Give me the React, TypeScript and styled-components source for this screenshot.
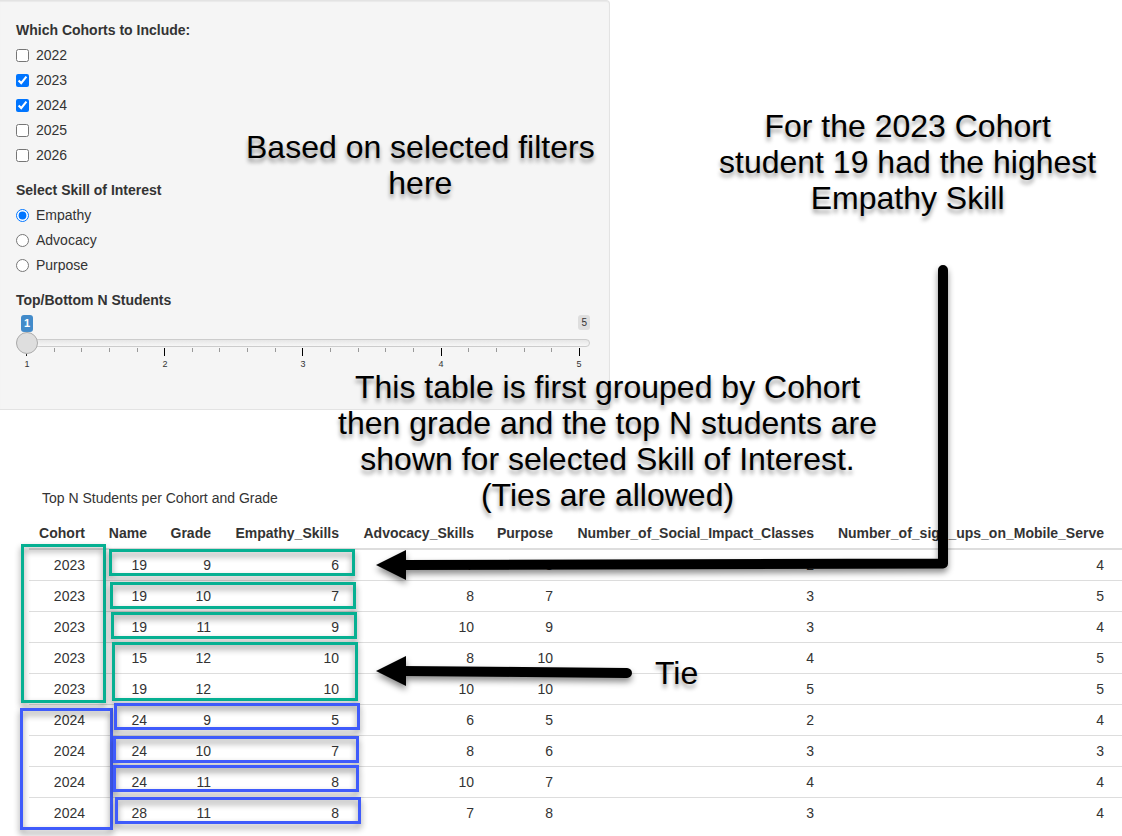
import React, { useState } from "react";
import styled, { createGlobalStyle } from "styled-components";

const GlobalStyle = createGlobalStyle`
  * { box-sizing: border-box; }
  body {
    margin: 0;
    background: #fff;
    color: #333;
    font: 14px/20px "Liberation Sans", Arial, sans-serif;
  }
`;

const Page = styled.div`
  position: relative;
  overflow: hidden;
  padding-bottom: 8px;
`;

const FilterPanel = styled.form`
  display: flex;
  flex-direction: column;
  gap: 10px;
  width: 100%;
  max-width: 610px;
  padding: 19px 19px 37px 16px;
  background: #f5f5f5;
  border: 1px solid #e3e3e3;
  border-left: 0;
  border-radius: 0 4px 4px 0;
  box-shadow: inset 0 1px 1px rgba(0, 0, 0, 0.05);
`;

const Group = styled.fieldset`
  display: flex;
  flex-direction: column;
  gap: 5px;
  margin: 0;
  padding: 0 0 5px;
  border: 0;
`;

const Legend = styled.legend`
  padding: 0;
  margin-bottom: 5px;
  font-weight: bold;
`;

const Option = styled.label`
  display: flex;
  align-items: center;
  gap: 7px;
`;

const Choice = styled.input`
  width: 13px;
  height: 13px;
  margin: 0;
  accent-color: #0075ff;
`;

const SliderField = styled.div`
  display: flex;
  flex-direction: column;
`;

const SliderLabel = styled.label`
  font-weight: bold;
`;

const Bubbles = styled.div`
  display: flex;
  justify-content: space-between;
  align-items: flex-start;
  height: 17px;
  margin-top: 5px;
  padding-left: 5px;
`;

const Bubble = styled.output<{ $active?: boolean }>`
  padding: ${(p) => (p.$active ? "1px 3px" : "0 3px")};
  border-radius: 3px;
  background: ${(p) => (p.$active ? "#428bca" : "#dedede")};
  color: ${(p) => (p.$active ? "#fff" : "#333")};
  font-size: ${(p) => (p.$active ? "11px" : "10px")};
  font-weight: ${(p) => (p.$active ? "bold" : "normal")};
  line-height: 15px;
`;

const Range = styled.input`
  appearance: none;
  position: relative;
  z-index: 1;
  width: 100%;
  height: 22px;
  margin: 0;
  background: transparent;

  &::-webkit-slider-runnable-track {
    height: 8px;
    border: 1px solid #ccc;
    border-radius: 8px;
    background: linear-gradient(to bottom, #dedede -50%, #fff 150%);
  }
  &::-webkit-slider-thumb {
    appearance: none;
    width: 22px;
    height: 22px;
    margin: -8px 0 0 -1px;
    border: 1px solid #ababab;
    border-radius: 50%;
    background: #dedede;
    box-shadow: 1px 1px 3px rgba(255, 255, 255, 0.3);
  }
`;

const Ticks = styled.div`
  display: flex;
  justify-content: space-between;
  height: 8px;
  margin-top: -6px;
  padding: 0 10px;
`;

const Tick = styled.span<{ $major: boolean }>`
  width: 1px;
  height: ${(p) => (p.$major ? 8 : 4)}px;
  background: ${(p) => (p.$major ? "#000" : "#999")};
`;

const TickLabels = styled.div`
  display: flex;
  justify-content: space-between;
  padding: 0 6px;
  font-size: 9px;
  line-height: 16px;
`;

const TickLabel = styled.span`
  width: 10px;
  text-align: center;
`;

const Results = styled.main`
  margin: 78px 0 0 29px;
`;

const Table = styled.table`
  width: 100%;
  table-layout: fixed;
  border-collapse: separate;
  border-spacing: 0;
`;

const Caption = styled.caption`
  padding: 0 13px 15px;
  text-align: left;
`;

const Col = styled.col<{ $width?: number }>`
  width: ${(p) => (p.$width ? `${p.$width}px` : "auto")};
`;

const HeadCell = styled.th`
  padding: 0 12px 5px 0;
  border-bottom: 2px solid #ddd;
  text-align: right;
  white-space: nowrap;
  &:last-child { padding-right: 18px; }
`;

const Cell = styled.td`
  height: 31px;
  padding: 0 12px;
  border-bottom: 1px solid #ddd;
  text-align: right;
  &:last-child { padding-right: 18px; }
  tr:last-child > & { border-bottom-color: transparent; }
`;

const Overlay = styled.div`
  position: absolute;
  inset: 0;
  pointer-events: none;
`;

const Note = styled.p<{ $x: number; $y: number }>`
  position: absolute;
  left: ${(p) => p.$x}px;
  top: ${(p) => p.$y}px;
  margin: 0;
  color: #000;
  font-size: 32px;
  line-height: 36px;
  text-align: center;
  white-space: pre;
  text-shadow: 0 4px 4px rgba(0, 0, 0, 0.4);
`;

const Frame = styled.div<{ $box: number[]; $color: string }>`
  position: absolute;
  left: ${(p) => p.$box[0]}px;
  top: ${(p) => p.$box[1]}px;
  width: ${(p) => p.$box[2]}px;
  height: ${(p) => p.$box[3]}px;
  border: 3px solid ${(p) => p.$color};
  filter: drop-shadow(0 4px 3px rgba(0, 0, 0, 0.45));
`;

const Arrows = styled.svg`
  position: absolute;
  left: 0;
  top: 0;
  filter: drop-shadow(0 4px 3px rgba(0, 0, 0, 0.45));
`;

const cohorts = ["2022", "2023", "2024", "2025", "2026"];
const skills = ["Empathy", "Advocacy", "Purpose"];
const columns: [string, number?][] = [
  ["Cohort", 68],
  ["Name", 62],
  ["Grade", 64],
  ["Empathy_Skills", 128],
  ["Advocacy_Skills", 135],
  ["Purpose", 79],
  ["Number_of_Social_Impact_Classes", 261],
  ["Number_of_sign_ups_on_Mobile_Serve"],
];
const rows = [
  [2023, 19, 9, 6, 7, 8, 2, 4],
  [2023, 19, 10, 7, 8, 7, 3, 5],
  [2023, 19, 11, 9, 10, 9, 3, 4],
  [2023, 15, 12, 10, 8, 10, 4, 5],
  [2023, 19, 12, 10, 10, 10, 5, 5],
  [2024, 24, 9, 5, 6, 5, 2, 4],
  [2024, 24, 10, 7, 8, 6, 3, 3],
  [2024, 24, 11, 8, 10, 7, 4, 4],
  [2024, 28, 11, 8, 7, 8, 3, 4],
];

const green = "#06b092";
const blue = "#3f5bfb";
const frames: { box: number[]; color: string }[] = [
  { box: [21, 544, 85, 159], color: green },
  { box: [109, 549, 246, 27], color: green },
  { box: [110, 582, 246, 27], color: green },
  { box: [111, 612, 246, 27], color: green },
  { box: [112, 642, 246, 59], color: green },
  { box: [20, 708, 93, 122], color: blue },
  { box: [114, 703, 246, 27], color: blue },
  { box: [113, 736, 246, 27], color: blue },
  { box: [113, 765, 246, 27], color: blue },
  { box: [115, 797, 246, 27], color: blue },
];

export default function App() {
  const [selected, setSelected] = useState(["2023", "2024"]);
  const [skill, setSkill] = useState("Empathy");
  const [count, setCount] = useState(1);

  const toggle = (year: string) =>
    setSelected((s) => (s.includes(year) ? s.filter((y) => y !== year) : [...s, year]));

  return (
    <Page>
      <GlobalStyle />
      <FilterPanel>
        <Group>
          <Legend>Which Cohorts to Include:</Legend>
          {cohorts.map((year) => (
            <Option key={year}>
              <Choice type="checkbox" checked={selected.includes(year)} onChange={() => toggle(year)} />
              {year}
            </Option>
          ))}
        </Group>
        <Group>
          <Legend>Select Skill of Interest</Legend>
          {skills.map((name) => (
            <Option key={name}>
              <Choice type="radio" name="skill" checked={skill === name} onChange={() => setSkill(name)} />
              {name}
            </Option>
          ))}
        </Group>
        <SliderField>
          <SliderLabel htmlFor="count">Top/Bottom N Students</SliderLabel>
          <Bubbles>
            <Bubble $active htmlFor="count">{count}</Bubble>
            <Bubble>5</Bubble>
          </Bubbles>
          <Range id="count" type="range" min={1} max={5} value={count} onChange={(e) => setCount(Number(e.target.value))} />
          <Ticks>
            {Array.from({ length: 21 }, (_, i) => (
              <Tick key={i} $major={i % 5 === 0} />
            ))}
          </Ticks>
          <TickLabels>
            {[1, 2, 3, 4, 5].map((n) => (
              <TickLabel key={n}>{n}</TickLabel>
            ))}
          </TickLabels>
        </SliderField>
      </FilterPanel>

      <Results>
        <Table>
          <Caption>Top N Students per Cohort and Grade</Caption>
          <colgroup>
            {columns.map(([name, width]) => (
              <Col key={name} $width={width} />
            ))}
          </colgroup>
          <thead>
            <tr>
              {columns.map(([name]) => (
                <HeadCell key={name} scope="col">{name}</HeadCell>
              ))}
            </tr>
          </thead>
          <tbody>
            {rows.map((row, r) => (
              <tr key={r}>
                {row.map((value, c) => (
                  <Cell key={c}>{value}</Cell>
                ))}
              </tr>
            ))}
          </tbody>
        </Table>
      </Results>

      <Overlay>
        {frames.map((f, i) => (
          <Frame key={i} $box={f.box} $color={f.color} />
        ))}
        <Arrows width="1122" height="836" viewBox="0 0 1122 836" aria-hidden="true">
          <path d="M943 270V563.5L402 565" fill="none" stroke="#000" strokeWidth="10" strokeLinecap="round" strokeLinejoin="round" />
          <path d="M376 565L406 550V580Z" />
          <path d="M627 673L402 671" fill="none" stroke="#000" strokeWidth="10" strokeLinecap="round" />
          <path d="M376 671L406 656V686Z" />
        </Arrows>
        <Note $x={246} $y={129}>{"Based on selected filters\nhere"}</Note>
        <Note $x={719} $y={108}>{"For the 2023 Cohort\nstudent 19 had the highest\nEmpathy Skill"}</Note>
        <Note $x={338} $y={369}>{"This table is first grouped by Cohort\nthen grade and the top N students are\nshown for selected Skill of Interest.\n(Ties are allowed)"}</Note>
        <Note $x={655} $y={655}>Tie</Note>
      </Overlay>
    </Page>
  );
}
